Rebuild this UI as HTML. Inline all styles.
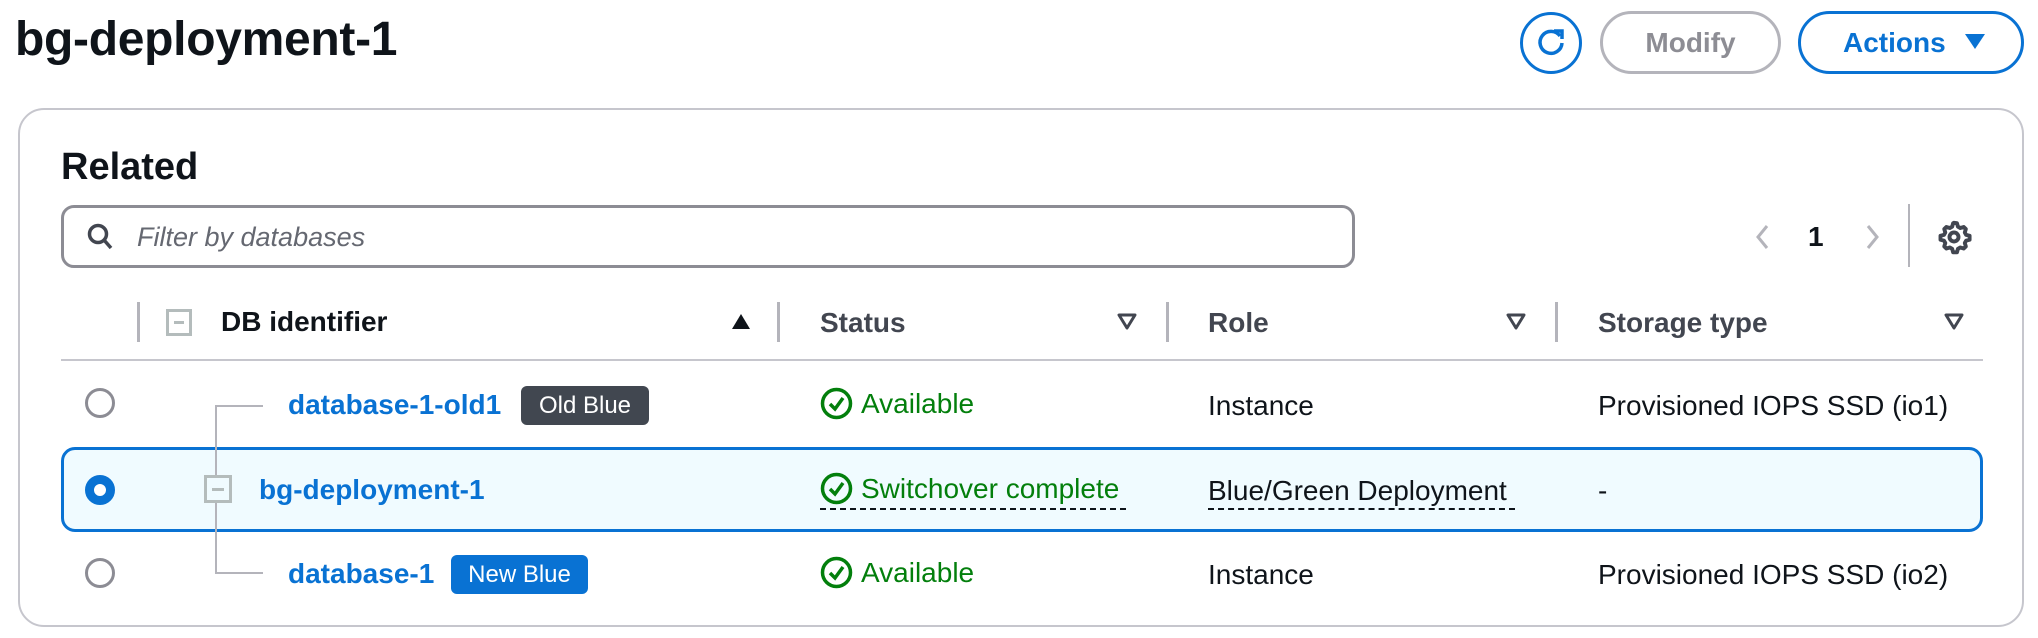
<!DOCTYPE html>
<html><head><meta charset="utf-8">
<style>
*{margin:0;padding:0;box-sizing:border-box}
body{width:2038px;height:638px;background:#fff;font-family:"Liberation Sans",sans-serif;color:#0f141a;position:relative;overflow:hidden}
.a{position:absolute;white-space:nowrap}
.t{font-size:28px;line-height:1}
.b{font-weight:bold}
.link{color:#0972d3;font-weight:bold}
.green{color:#037f0c}
.sep{position:absolute;width:3px;background:#b4b4bb}
.radio{position:absolute;width:30px;height:30px;border-radius:50%;border:3px solid #8c8c94;background:#fff}
.badge{position:absolute;height:39px;border-radius:6px;color:#fff;font-size:24px;line-height:39px;text-align:center}
.tl{position:absolute;background:#b4b4bb}
</style></head><body>
<div class="a b" style="left:15px;top:16px;font-size:48px;line-height:1;letter-spacing:-0.3px">bg-deployment-1</div>

<div class="a" style="left:1520px;top:12px;width:62px;height:62px;border:3px solid #0972d3;border-radius:50%"></div>
<svg class="a" style="left:1533px;top:25px" width="36" height="36" viewBox="0 0 36 36"><path d="M27 11 A11 11 0 1 0 29 18" fill="none" stroke="#0972d3" stroke-width="3.5"/><path d="M21 6 H29 V14" fill="none" stroke="#0972d3" stroke-width="3.5"/></svg>
<div class="a b" style="left:1600px;top:11px;width:181px;height:63px;border:3px solid #b4b4bb;border-radius:32px;color:#8d8d94;font-size:28px;line-height:57px;text-align:center">Modify</div>
<div class="a b" style="left:1798px;top:11px;width:226px;height:63px;border:3px solid #0972d3;border-radius:32px;color:#0972d3;font-size:28px;line-height:57px;padding-left:42px">Actions<svg style="position:absolute;left:163px;top:19px" width="22" height="18" viewBox="0 0 22 18"><path d="M1 1 H21 L11 16 Z" fill="#0972d3"/></svg></div>

<div class="a" style="left:18px;top:108px;width:2006px;height:519px;border:2px solid #c6c6cd;border-radius:26px"></div>
<div class="a b" style="left:61px;top:148px;font-size:38px;line-height:1">Related</div>

<div class="a" style="left:61px;top:205px;width:1294px;height:63px;border:3px solid #8c8c94;border-radius:13px"></div>
<svg class="a" style="left:86px;top:222px" width="30" height="30" viewBox="0 0 30 30"><circle cx="12" cy="12" r="8.5" fill="none" stroke="#424650" stroke-width="3.5"/><path d="M18 18 L25 26" stroke="#424650" stroke-width="3.5"/></svg>
<div class="a t" style="left:137px;top:224px;font-style:italic;color:#656871;font-size:27px">Filter by databases</div>

<svg class="a" style="left:1752px;top:222px" width="20" height="30" viewBox="0 0 20 30"><path d="M15 4 L6 15 L15 26" fill="none" stroke="#b4b4bb" stroke-width="3"/></svg>
<div class="a b" style="left:1808px;top:223px;font-size:28px;line-height:1">1</div>
<svg class="a" style="left:1863px;top:222px" width="20" height="30" viewBox="0 0 20 30"><path d="M5 4 L14 15 L5 26" fill="none" stroke="#b4b4bb" stroke-width="3"/></svg>
<div class="sep" style="left:1908px;top:204px;height:63px;width:2px"></div>
<svg class="a" style="left:1936px;top:219px" width="36" height="36" viewBox="0 0 24 24"><path d="M12 2.5l2 .3.6 2.3 1.6.9 2.3-.7 1.4 1.4-.7 2.3.9 1.6 2.3.6v2.6l-2.3.6-.9 1.6.7 2.3-1.4 1.4-2.3-.7-1.6.9-.6 2.3h-2.6l-.6-2.3-1.6-.9-2.3.7-1.4-1.4.7-2.3-.9-1.6-2.3-.6v-2.6l2.3-.6.9-1.6-.7-2.3 1.4-1.4 2.3.7 1.6-.9.6-2.3z" fill="none" stroke="#424650" stroke-width="2.6" stroke-linejoin="round"/><circle cx="12" cy="12" r="3" fill="none" stroke="#424650" stroke-width="2.6"/></svg>

<div class="sep" style="left:137px;top:302px;height:40px"></div>
<div class="a" style="left:166px;top:309px;width:26px;height:27px;border:3px solid #b4bcbc"></div>
<div class="a" style="left:174px;top:321px;width:10px;height:3px;background:#b4bcbc"></div>
<div class="a t b" style="left:221px;top:308px">DB identifier</div>
<svg class="a" style="left:731px;top:313px" width="20" height="17" viewBox="0 0 20 17"><path d="M10 1 L19 16 H1 Z" fill="#0f141a"/></svg>
<div class="sep" style="left:777px;top:302px;height:40px"></div>
<div class="a t b" style="left:820px;top:309px;color:#424650">Status</div>
<svg class="a" style="left:1117px;top:313px" width="20" height="17" viewBox="0 0 20 17"><path d="M2 2 H18 L10 15 Z" fill="none" stroke="#424650" stroke-width="3" stroke-linejoin="round"/></svg>
<div class="sep" style="left:1166px;top:302px;height:40px"></div>
<div class="a t b" style="left:1208px;top:309px;color:#424650">Role</div>
<svg class="a" style="left:1506px;top:313px" width="20" height="17" viewBox="0 0 20 17"><path d="M2 2 H18 L10 15 Z" fill="none" stroke="#424650" stroke-width="3" stroke-linejoin="round"/></svg>
<div class="sep" style="left:1555px;top:302px;height:40px"></div>
<div class="a t b" style="left:1598px;top:309px;color:#424650">Storage type</div>
<svg class="a" style="left:1944px;top:313px" width="20" height="17" viewBox="0 0 20 17"><path d="M2 2 H18 L10 15 Z" fill="none" stroke="#424650" stroke-width="3" stroke-linejoin="round"/></svg>
<div class="a" style="left:61px;top:359px;width:1922px;height:2px;background:#c6c6cd"></div>

<div class="a" style="left:61px;top:447px;width:1922px;height:85px;border:3px solid #0972d3;border-radius:14px;background:#f0fbff"></div>

<div class="tl" style="left:215px;top:405px;width:2px;height:168px"></div>
<div class="tl" style="left:215px;top:405px;width:48px;height:2px"></div>
<div class="tl" style="left:215px;top:572px;width:48px;height:2px"></div>
<div class="a" style="left:204px;top:475px;width:28px;height:28px;border:3px solid #b4bcbc;background:#f0fbff"></div>
<div class="a" style="left:212px;top:488px;width:12px;height:3px;background:#b4bcbc"></div>

<div class="radio" style="left:85px;top:388px"></div>
<div class="a t link" style="left:288px;top:391px">database-1-old1</div>
<div class="badge" style="left:521px;top:386px;width:128px;background:#414750">Old Blue</div>
<svg class="a" style="left:820px;top:387px" width="33" height="33" viewBox="0 0 33 33"><circle cx="16.5" cy="16.5" r="14" fill="none" stroke="#037f0c" stroke-width="3.5"/><path d="M10 17 L15 22 L23 11" fill="none" stroke="#037f0c" stroke-width="3.5"/></svg>
<div class="a t green" style="left:861px;top:390px">Available</div>
<div class="a t" style="left:1208px;top:392px">Instance</div>
<div class="a t" style="left:1598px;top:392px">Provisioned IOPS SSD (io1)</div>

<div class="a" style="left:85px;top:475px;width:30px;height:30px;border-radius:50%;border:9px solid #0972d3;background:#fff"></div>
<div class="a t link" style="left:259px;top:476px">bg-deployment-1</div>
<svg class="a" style="left:820px;top:472px" width="33" height="33" viewBox="0 0 33 33"><circle cx="16.5" cy="16.5" r="14" fill="none" stroke="#037f0c" stroke-width="3.5"/><path d="M10 17 L15 22 L23 11" fill="none" stroke="#037f0c" stroke-width="3.5"/></svg>
<div class="a t green" style="left:861px;top:475px">Switchover complete</div>
<div class="a" style="left:820px;top:508px;width:306px;border-top:2px dashed #0f141a"></div>
<div class="a t" style="left:1208px;top:477px">Blue/Green Deployment</div>
<div class="a" style="left:1208px;top:508px;width:307px;border-top:2px dashed #0f141a"></div>
<div class="a t" style="left:1598px;top:477px">-</div>

<div class="radio" style="left:85px;top:558px"></div>
<div class="a t link" style="left:288px;top:560px">database-1</div>
<div class="badge" style="left:451px;top:555px;width:137px;background:#0972d3">New Blue</div>
<svg class="a" style="left:820px;top:556px" width="33" height="33" viewBox="0 0 33 33"><circle cx="16.5" cy="16.5" r="14" fill="none" stroke="#037f0c" stroke-width="3.5"/><path d="M10 17 L15 22 L23 11" fill="none" stroke="#037f0c" stroke-width="3.5"/></svg>
<div class="a t green" style="left:861px;top:559px">Available</div>
<div class="a t" style="left:1208px;top:561px">Instance</div>
<div class="a t" style="left:1598px;top:561px">Provisioned IOPS SSD (io2)</div>
</body></html>
